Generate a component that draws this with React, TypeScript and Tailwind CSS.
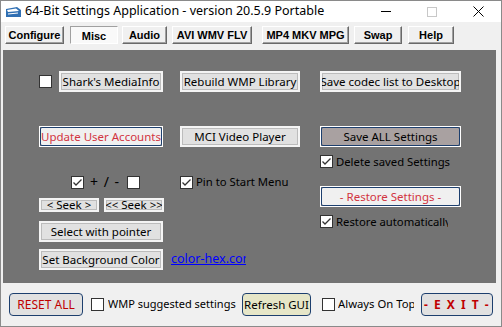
import React from "react";

const ui = { fontFamily: '"Noto Sans", "Open Sans", sans-serif' };
const tabFont = { fontFamily: '"Liberation Sans", Arial, sans-serif' };

function Check({ on = false }: { on?: boolean }) {
  return (
    <span className="flex h-[13px] w-[13px] shrink-0 items-center justify-center border border-[#333] bg-white">
      {on && (
        <svg width="11" height="11" viewBox="0 0 11 11">
          <path d="M1.5 5.5 L4 8 L9.5 2.5" fill="none" stroke="#333" strokeWidth="1.3" />
        </svg>
      )}
    </span>
  );
}

function PanelButton({ children, w, h = 21 }: { children: React.ReactNode; w: number; h?: number }) {
  return (
    <div
      style={{ width: w, height: h }}
      className="flex shrink-0 items-center justify-center overflow-hidden whitespace-nowrap border-2 border-[#f4f4f4] bg-[#e1e1e1] text-[11.5px] leading-none text-black shadow-[inset_0_0_0_1px_#bcbcbc]"
    >
      {children}
    </div>
  );
}

function FocusButton({ children, w, h = 21, face }: { children: React.ReactNode; w: number; h?: number; face: string }) {
  return (
    <div style={{ width: w, height: h }} className="shrink-0 border border-white">
      <div
        className={`flex h-full w-full items-center justify-center overflow-hidden whitespace-nowrap rounded-[2px] border border-[#1d3f6e] text-[11.5px] leading-none ${face}`}
      >
        {children}
      </div>
    </div>
  );
}

function RoundButton({ children, w, face }: { children: React.ReactNode; w: number; face: string }) {
  return (
    <div
      style={{ width: w }}
      className={`flex h-[23px] shrink-0 items-center justify-center overflow-hidden whitespace-pre rounded-[4px] border border-[#1d3f6e] leading-none ${face}`}
    >
      {children}
    </div>
  );
}

function Tab({ label, w, ml, active = false }: { label: string; w: number; ml: number; active?: boolean }) {
  return (
    <div
      style={{ width: w, marginLeft: ml, ...tabFont }}
      className={
        active
          ? "flex h-[18px] shrink-0 items-center justify-center border border-t-[#a0a0a0] border-l-[#a0a0a0] border-r-white border-b-white bg-[#f9f9f9] pt-[3px] text-[11px] font-bold text-black"
          : "flex h-[18px] shrink-0 items-center justify-center border border-t-white border-l-white border-r-[#696969] border-b-[#696969] bg-[#f0f0f0] text-[11px] font-bold text-black shadow-[inset_-1px_-1px_0_#a0a0a0]"
      }
    >
      {label}
    </div>
  );
}

export default function App() {
  return (
    <div style={ui} className="flex h-[327px] w-[502px] flex-col overflow-hidden border border-[#8a8a8a] bg-[#f0f0f0]">
      {/* title bar */}
      <div className="flex h-[21px] shrink-0 items-center bg-white">
        <svg className="ml-[4px]" width="17" height="12" viewBox="0 0 17 12">
          <path d="M1 3 L12 1 L16 4 L16 11 L1 11 Z" fill="#2f6fb3" />
          <path d="M2 4 L11 2.5 L14 5 L3 6 Z" fill="#ffffff" />
          <path d="M3 8 L13 7" stroke="#ffffff" strokeWidth="1" />
        </svg>
        <span className="ml-[3px] whitespace-nowrap text-[12.5px] text-black">64-Bit Settings Application - version 20.5.9 Portable</span>
        <div className="ml-auto flex h-full items-center">
          <div className="flex w-[46px] justify-center">
            <div className="h-px w-[10px] bg-black" />
          </div>
          <div className="flex w-[46px] justify-center">
            <div className="h-[10px] w-[10px] border border-[#c8c8c8]" />
          </div>
          <div className="flex w-[46px] justify-center">
            <svg width="11" height="11" viewBox="0 0 11 11">
              <path d="M0.5 0.5 L10.5 10.5 M10.5 0.5 L0.5 10.5" stroke="#000" strokeWidth="1" />
            </svg>
          </div>
        </div>
      </div>

      {/* tabs */}
      <div className="flex h-[28px] shrink-0 items-start pt-[4px]">
        <Tab label="Configure" w={59} ml={4} />
        <Tab label="Misc" w={48} ml={6} active />
        <Tab label="Audio" w={45} ml={4} />
        <Tab label="AVI WMV FLV" w={80} ml={5} />
        <Tab label="MP4 MKV MPG" w={87} ml={10} />
        <Tab label="Swap" w={48} ml={5} />
        <Tab label="Help" w={46} ml={6} />
      </div>

      {/* panel */}
      <div className="ml-[2px] flex h-[233px] w-[493px] shrink-0 gap-[17px] bg-[#737373] pl-[36px] pt-[21px] text-[11px] text-black">
        {/* column 1 */}
        <div className="flex w-[124px] flex-col">
          <div className="flex h-[21px] items-center gap-[7px]">
            <Check />
            <PanelButton w={104}>Shark's MediaInfo</PanelButton>
          </div>
          <div className="mt-[34px]">
            <FocusButton w={124} face="bg-[#f0f0f0] text-[#d2343f]">Update User Accounts</FocusButton>
          </div>
          <div className="mt-[29px] flex h-[12px] items-center pl-[32px]">
            <Check on />
            <span className="ml-[6px] mr-[8px] whitespace-nowrap text-[14px] leading-none [word-spacing:2px]">+ / -</span>
            <Check />
          </div>
          <div className="mt-[10px] flex gap-[5px]">
            <PanelButton w={60} h={14}>{"<  Seek  >"}</PanelButton>
            <PanelButton w={60} h={14}>{"<< Seek >>"}</PanelButton>
          </div>
          <div className="mt-[9px]">
            <PanelButton w={124}>Select with pointer</PanelButton>
          </div>
          <div className="mt-[7px] flex items-center">
            <PanelButton w={124}>Set Background Color</PanelButton>
            <span className="ml-[8px] w-[75px] shrink-0 overflow-hidden whitespace-nowrap text-[12.5px] text-[#0000ff] underline">color-hex.com</span>
          </div>
        </div>

        {/* column 2 */}
        <div className="flex w-[120px] flex-col">
          <PanelButton w={120}>Rebuild WMP Library</PanelButton>
          <div className="mt-[34px]">
            <PanelButton w={120}>MCI Video Player</PanelButton>
          </div>
          <div className="mt-[29px] flex h-[12px] items-center gap-[3px]">
            <Check on />
            <span className="whitespace-nowrap text-[11.3px] leading-none">Pin to Start Menu</span>
          </div>
        </div>

        {/* column 3 */}
        <div className="ml-[3px] flex w-[141px] flex-col">
          <PanelButton w={141}>Save codec list to Desktop</PanelButton>
          <div className="mt-[34px]">
            <FocusButton w={141} face="bg-[#a9a1a1] text-black">Save ALL Settings</FocusButton>
          </div>
          <div className="mt-[8px] flex h-[13px] items-center gap-[3px]">
            <Check on />
            <span className="whitespace-nowrap text-[11.3px] leading-none">Delete saved Settings</span>
          </div>
          <div className="mt-[18px]">
            <FocusButton w={141} face="bg-[#f0f0f0] text-[#d2343f]">- Restore Settings -</FocusButton>
          </div>
          <div className="mt-[8px] flex h-[13px] items-center gap-[3px]">
            <Check on />
            <span className="w-[112px] overflow-hidden whitespace-nowrap text-[11.3px] leading-none">Restore automatically</span>
          </div>
        </div>
      </div>

      {/* bottom bar */}
      <div className="flex flex-1 items-center pl-[8px] text-[11px] text-black">
        <RoundButton w={74} face="bg-[#e1e1e1] text-[#c00000] text-[12px]">RESET ALL</RoundButton>
        <div className="ml-[8px] flex items-center gap-[4px]">
          <Check />
          <span className="w-[129px] overflow-hidden whitespace-nowrap">WMP suggested settings</span>
        </div>
        <div className="ml-[5px]">
          <RoundButton w={69} face="bg-[#e6e6c8] text-black text-[11.5px]">Refresh GUI</RoundButton>
        </div>
        <div className="ml-[11px] flex items-center gap-[3px]">
          <Check />
          <span className="w-[76px] overflow-hidden whitespace-nowrap text-[11.3px]">Always On Top</span>
        </div>
        <div className="ml-[7px]">
          <RoundButton w={72} face="bg-[#e1e1e1] text-[#c00000] text-[12px] font-bold tracking-[1.5px]">{"- E X I T -"}</RoundButton>
        </div>
      </div>
    </div>
  );
}
